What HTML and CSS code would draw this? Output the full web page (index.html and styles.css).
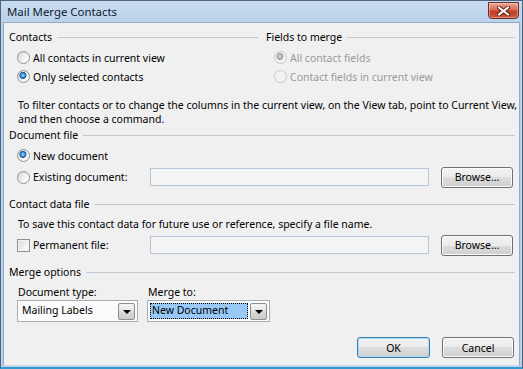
FILE: index.html
```html
<!DOCTYPE html>
<html lang="en">
<head>
  <meta charset="UTF-8" />
  <title>Mail Merge Contacts</title>
  <link rel="stylesheet" href="styles.css">
</head>
<body>

  <div class="window">
    <div class="titlebar">
      <span class="title">Mail Merge Contacts</span>
      <button class="close-btn" aria-label="Close">
        <svg width="13" height="10" viewBox="0 0 13 10">
          <path d="M2 1.5 L11 8.5 M11 1.5 L2 8.5" stroke="#5b1b12" stroke-width="4" stroke-linecap="square" />
          <path d="M2 1.5 L11 8.5 M11 1.5 L2 8.5" stroke="#ffffff" stroke-width="2" stroke-linecap="square" />
        </svg>
      </button>
    </div>

    <main class="content">
      <div class="columns">
        <section>
          <div class="group-title">Contacts</div>
          <label class="option"><span class="radio"></span>All contacts in current view</label>
          <label class="option"><span class="radio checked"></span>Only selected contacts</label>
        </section>
        <section class="disabled">
          <div class="group-title">Fields to merge</div>
          <label class="option"><span class="radio checked"></span>All contact fields</label>
          <label class="option"><span class="radio"></span>Contact fields in current view</label>
        </section>
      </div>

      <p class="note">To filter contacts or to change the columns in the current view, on the View tab, point to Current View,<br>and then choose a command.</p>

      <div class="group-title tight">Document file</div>
      <label class="option first"><span class="radio checked"></span>New document</label>
      <div class="file-row">
        <label class="option fixed"><span class="radio"></span>Existing document:</label>
        <div class="textbox"></div>
        <button class="btn">Browse...</button>
      </div>

      <div class="group-title spaced">Contact data file</div>
      <p class="hint">To save this contact data for future use or reference, specify a file name.</p>
      <div class="file-row second">
        <label class="option fixed"><span class="checkbox"></span>Permanent file:</label>
        <div class="textbox"></div>
        <button class="btn">Browse...</button>
      </div>

      <div class="group-title spaced">Merge options</div>
      <div class="merge-grid">
        <div class="merge-col first-col">
          <span class="field-label">Document type:</span>
          <div class="combo">
            <span class="combo-value">Mailing Labels</span>
            <span class="combo-arrow"></span>
          </div>
        </div>
        <div class="merge-col second-col">
          <span class="field-label">Merge to:</span>
          <div class="combo">
            <span class="combo-value selected">New Document</span>
            <span class="combo-arrow"></span>
          </div>
        </div>
      </div>

      <div class="actions">
        <button class="btn default">OK</button>
        <button class="btn">Cancel</button>
      </div>
    </main>
  </div>

</body>
</html>
```

FILE: styles.css
```css
* {
  box-sizing: border-box;
}

body {
  margin: 0;
  font-family: 'Noto Sans', sans-serif;
  font-size: 10.5px;
  color: #000;
  background: #fff;
}

.window {
  width: 523px;
  height: 369px;
  display: flex;
  flex-direction: column;
  border: 1px solid #4a6481;
  border-bottom: 2px solid #2f9bd0;
  background: linear-gradient(#c9dcef, #b9d1ea 22px, #b9d1ea);
}

.titlebar {
  height: 21px;
  flex: none;
  display: flex;
  justify-content: space-between;
  align-items: center;
  padding: 0 3px 0 6px;
}

.title {
  font-size: 11.4px;
  color: #0c1b2c;
}

.close-btn {
  align-self: flex-start;
  margin-top: 1px;
  width: 31px;
  height: 17px;
  padding: 0;
  display: flex;
  justify-content: center;
  align-items: center;
  border: 1px solid #6e2b24;
  border-radius: 0 0 4px 4px;
  background: linear-gradient(#eba697, #d86c56 45%, #c23d24 55%, #cc5a3c);
  box-shadow: inset 0 0 0 1px rgba(255, 255, 255, 0.35);
}

.content {
  flex: 1;
  margin: 0 2px 1px;
  background: #f0f0f0;
  border: 1px solid #93abc4;
  border-bottom-color: #c9d8e6;
  padding: 6px 4px 0 5px;
  overflow: hidden;
}

.columns {
  display: grid;
  grid-template-columns: 249px 1fr;
  column-gap: 8px;
}

.group-title {
  display: flex;
  align-items: center;
  gap: 5px;
  height: 16px;
  white-space: nowrap;
}

.group-title::after {
  content: "";
  flex: 1;
  border-top: 1px solid #c0c9d2;
}

.group-title.tight {
  margin-top: 1px;
}

.group-title.spaced {
  margin-top: 8px;
}

.option {
  display: flex;
  align-items: center;
  gap: 3px;
  height: 19px;
  margin-left: 8px;
  white-space: nowrap;
}

.columns .option:first-of-type {
  margin-top: 3px;
}

.option.first {
  margin-top: 3px;
}

.option.fixed {
  width: 133px;
  margin-left: 8px;
  flex: none;
}

.radio {
  width: 13px;
  height: 13px;
  flex: none;
  border-radius: 50%;
  border: 1px solid #8e9295;
  background: linear-gradient(135deg, #d4d4d4, #f8f8f8 70%, #ffffff);
}

.radio.checked {
  background:
    radial-gradient(circle at 45% 40%, #a8dcff 0, #3b8fd6 2px, #1b5896 3.2px, transparent 3.8px),
    linear-gradient(135deg, #d4d4d4, #f8f8f8 70%, #ffffff);
}

.checkbox {
  width: 13px;
  height: 13px;
  flex: none;
  border: 1px solid #8e9295;
  background: linear-gradient(135deg, #d8d8d8, #f6f6f6 70%, #ffffff);
  box-shadow: inset 0 0 0 1px #f4f4f4;
}

.disabled .option {
  color: #9a9a9a;
}

.disabled .radio {
  border-color: #c6c8ca;
  background: #f3f3f3;
}

.disabled .radio.checked {
  background:
    radial-gradient(circle at 45% 40%, #d8d8d8 0, #b4b4b4 2px, #9d9d9d 3.2px, transparent 3.8px),
    #f3f3f3;
}

.note {
  margin: 12px 0 0 9px;
  line-height: 14px;
  white-space: nowrap;
}

.hint {
  margin: 5px 0 0 9px;
  line-height: 15px;
  white-space: nowrap;
}

.file-row {
  display: flex;
  align-items: center;
  height: 22px;
  margin-top: 1px;
}

.file-row.second {
  margin-top: 2px;
}

.textbox {
  width: 279px;
  height: 18px;
  border: 1px solid #b6c6d7;
  background: #f4f4f4;
  margin-right: 12px;
}

.btn {
  font: inherit;
  color: #000;
  width: 72px;
  height: 21px;
  padding: 0;
  border: 1px solid #707070;
  border-radius: 3px;
  background: linear-gradient(#f2f2f2, #ebebeb 50%, #dddddd 50%, #cfcfcf);
  box-shadow: inset 0 0 0 1px #fbfbfb;
}

.btn.default {
  width: 73px;
  border-color: #3c7fb1;
  box-shadow: inset 0 0 0 1px #a8dcf5;
}

.merge-grid {
  display: flex;
  gap: 9px;
  margin: 5px 0 0 8px;
}

.merge-col {
  display: flex;
  flex-direction: column;
}

.first-col {
  width: 121px;
}

.second-col {
  width: 123px;
}

.field-label {
  line-height: 15px;
  padding-left: 1px;
}

.combo {
  display: flex;
  align-items: center;
  height: 22px;
  border: 1px solid #a9acb1;
  background: #fbfbfb;
  padding: 2px;
}

.combo-value {
  flex: 1;
  height: 16px;
  line-height: 15px;
  padding: 0 2px;
  white-space: nowrap;
}

.combo-value.selected {
  background: #99c9f6;
  outline: 1px dotted #000;
  outline-offset: -1px;
  margin-right: 2px;
}

.combo-arrow {
  width: 17px;
  height: 17px;
  flex: none;
  display: flex;
  justify-content: center;
  align-items: center;
  border: 1px solid #8a8d91;
  border-radius: 2px;
  background: linear-gradient(#f4f4f4, #e6e6e6 50%, #d8d8d8 50%, #cdcdcd);
}

.combo-arrow::after {
  content: "";
  border-left: 4px solid transparent;
  border-right: 4px solid transparent;
  border-top: 4px solid #000;
  margin-top: 2px;
}

.actions {
  display: flex;
  justify-content: flex-end;
  gap: 12px;
  margin: 15px 1px 0 0;
}
```
